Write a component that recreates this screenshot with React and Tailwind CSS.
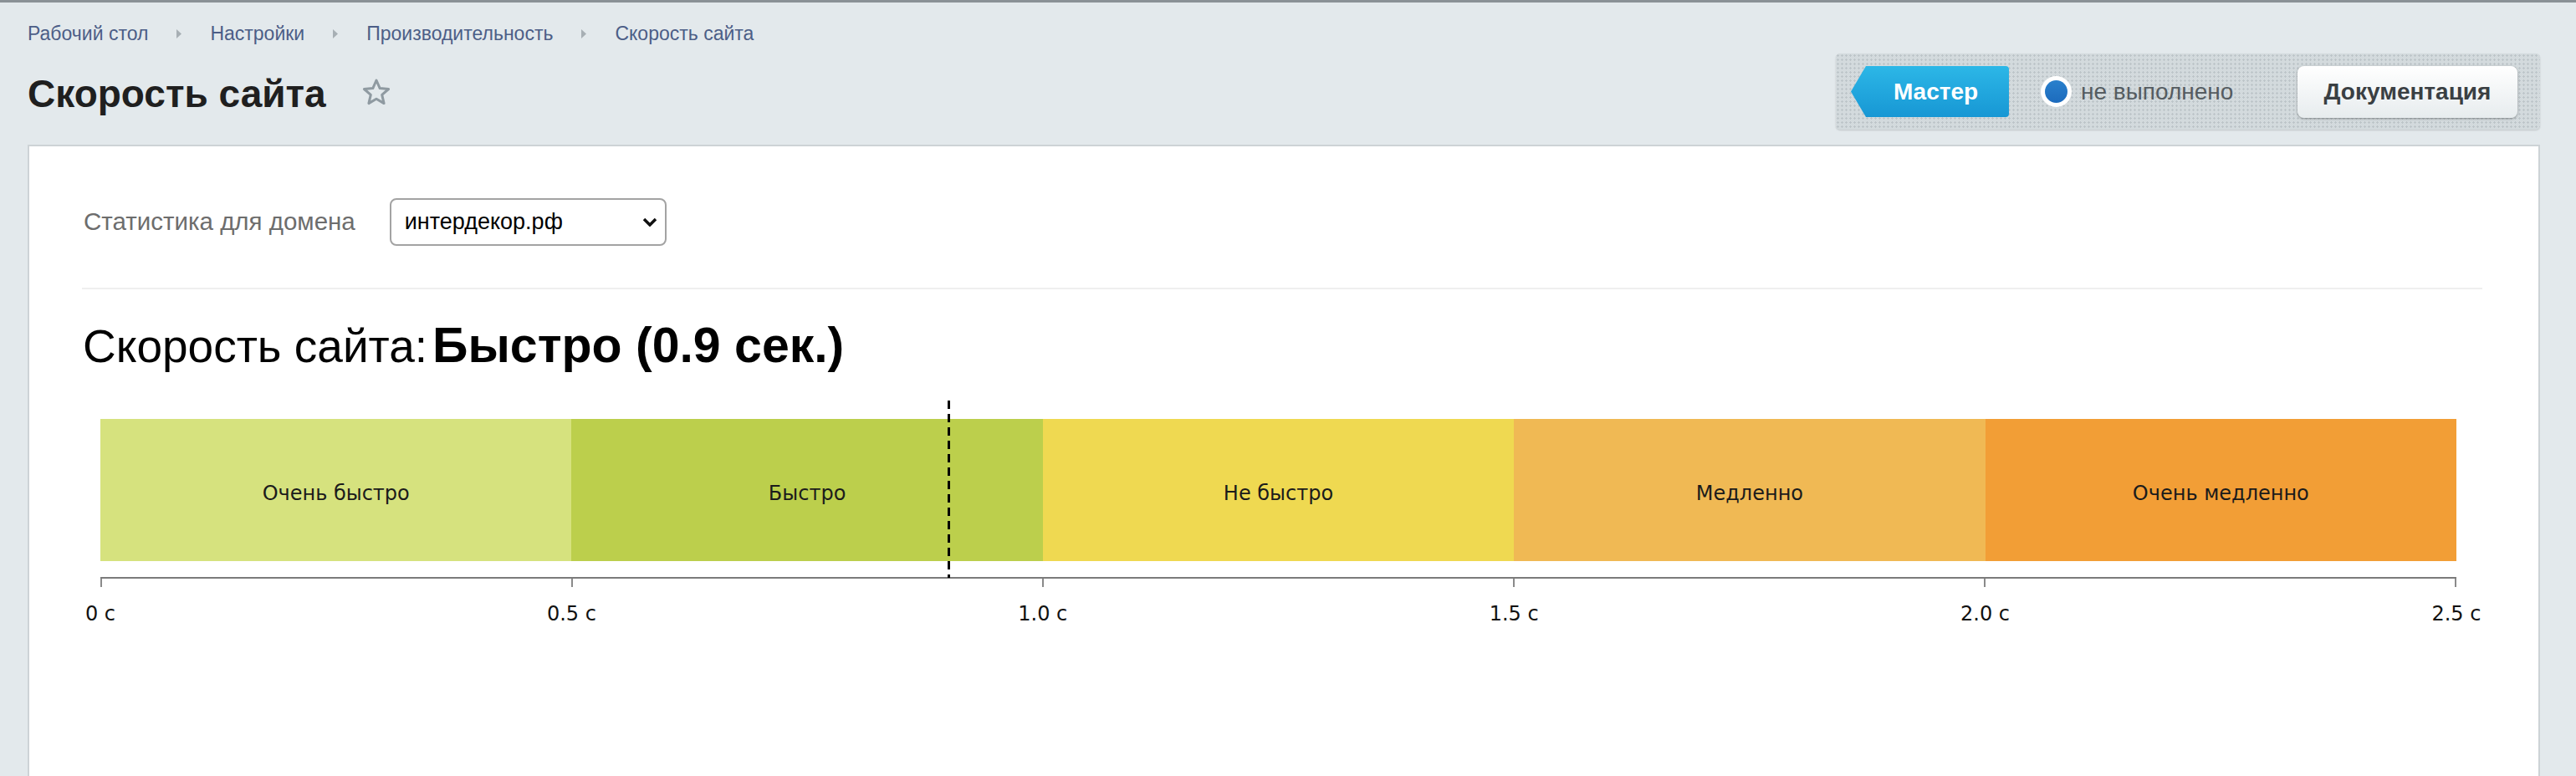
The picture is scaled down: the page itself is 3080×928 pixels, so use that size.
import React from 'react';

// speed zones of the chart, 0.5 s each
const zones = [
  { label: 'Очень быстро', color: 'bg-[#d6e27e]' },
  { label: 'Быстро', color: 'bg-[#bccf4c]' },
  { label: 'Не быстро', color: 'bg-[#efd951]' },
  { label: 'Медленно', color: 'bg-[#f0b954]' },
  { label: 'Очень медленно', color: 'bg-[#f29e36]' },
];

const ticks = ['0 с', '0.5 с', '1.0 с', '1.5 с', '2.0 с', '2.5 с'];

const crumbs = ['Рабочий стол', 'Настройки', 'Производительность', 'Скорость сайта'];

const SCALE_MAX = 2.5;
const speed = 0.9;

function Arrow() {
  return (
    <svg width="6" height="11" viewBox="0 0 6 11" className="mx-[34px]">
      <path d="M0 0 L6 5.5 L0 11 Z" fill="#a7afb4" />
    </svg>
  );
}

function Star() {
  return (
    <svg width="36" height="35" viewBox="0 0 36 35" className="ml-[42px] mt-[4px]">
      <path
        d="M18 3 L22.2 12.6 L32.6 13.5 L24.7 20.4 L27.1 30.6 L18 25.2 L8.9 30.6 L11.3 20.4 L3.4 13.5 L13.8 12.6 Z"
        fill="none"
        stroke="#8f9aa1"
        strokeWidth="3"
        strokeLinejoin="round"
      />
    </svg>
  );
}

function SpeedChart() {
  const markerLeft = (speed / SCALE_MAX) * 2817;

  return (
    <div className="relative ml-[22px] mt-[36px] w-[2817px] pt-[22px] font-['DejaVu_Sans',sans-serif]">
      {/* measured value marker */}
      <div
        className="absolute top-0 h-[212px] w-[3px] bg-[repeating-linear-gradient(to_bottom,#000_0,#000_10px,transparent_10px,transparent_16px)]"
        style={{ left: markerLeft - 1 }}
      />

      <div className="flex h-[170px]">
        {zones.map((z) => (
          <div
            key={z.label}
            className={`flex flex-1 items-center justify-center pt-[8px] text-[24px] text-[#1b1b1b] ${z.color}`}
          >
            {z.label}
          </div>
        ))}
      </div>

      <div className="mt-[19px] h-[2px] bg-[#7b7b7b]" />
      <div className="flex justify-between">
        {ticks.map((t) => (
          <div key={t} className="h-[10px] w-[2px] bg-[#8a8a8a]" />
        ))}
      </div>
      <div className="mt-[20px] flex justify-between">
        {ticks.map((t) => (
          <div key={t} className="flex w-0 justify-center whitespace-nowrap text-[24px] leading-[24px] text-[#111]">
            {t}
          </div>
        ))}
      </div>
    </div>
  );
}

export default function App() {
  return (
    <div className="min-h-screen overflow-hidden bg-[#e3e9ec] font-['Liberation_Sans',Arial,sans-serif]">
      <div className="h-[3px] bg-[#8a9196]" />

      <div className="pl-[33px] pr-[43px]">
        {/* breadcrumbs */}
        <div className="mt-[26px] flex h-[23px] items-center text-[23px] leading-[23px] text-[#4c5e87]">
          {crumbs.map((c, i) => (
            <React.Fragment key={c}>
              {i > 0 && <Arrow />}
              <span>{c}</span>
            </React.Fragment>
          ))}
        </div>

        {/* title row + wizard panel */}
        <div className="mt-[12px] flex items-start justify-between">
          <div className="mt-[25px] flex items-start">
            <h1 className="text-[46px] font-bold leading-[46px] text-[#1f1f1f]">Скорость сайта</h1>
            <Star />
          </div>

          <div className="flex h-[91px] w-[842px] items-center rounded-[5px] bg-[#d3dadd] bg-[radial-gradient(#bcc4c8_1px,transparent_1.3px)] bg-[length:5px_5px] pl-[18px] pr-[27px] shadow-[0_1px_2px_rgba(0,0,0,0.15)]">
            <div className="flex h-[61px] w-[189px] items-center justify-center rounded-r-[4px] bg-gradient-to-b from-[#2cb7e7] to-[#1797d4] pl-[14px] text-[28px] font-bold text-white [clip-path:polygon(18px_0,100%_0,100%_100%,18px_100%,0_50%)]">
              Мастер
            </div>
            <div className="ml-[38px] flex h-[37px] w-[37px] items-center justify-center rounded-full bg-white">
              <div className="h-[27px] w-[27px] rounded-full bg-gradient-to-b from-[#2a80cc] to-[#1c6bbd]" />
            </div>
            <span className="ml-[11px] text-[28px] text-[#555c61]">не выполнено</span>
            <button className="ml-auto flex h-[62px] w-[263px] items-center justify-center rounded-[8px] bg-gradient-to-b from-[#ffffff] to-[#e7ecee] text-[28px] font-bold text-[#3a3f43] shadow-[0_1px_3px_rgba(0,0,0,0.35)]">
              Документация
            </button>
          </div>
        </div>

        {/* main card */}
        <div className="mt-[18px] h-[800px] border-[2px] border-[#cdd3d6] bg-white pl-[63px] pr-[67px]">
          <div className="mt-[62px] flex items-center">
            <span className="ml-[2px] text-[29.5px] text-[#6d6d6d]">Статистика для домена</span>
            <div className="relative ml-[41px]">
              <select className="h-[57px] w-[331px] appearance-none rounded-[8px] border-[2px] border-[#a3a3a3] bg-white pl-[16px] text-[27px] text-black outline-none">
                <option>интердекор.рф</option>
              </select>
              <svg width="18" height="11" viewBox="0 0 18 11" className="pointer-events-none absolute right-[11px] top-[23px]">
                <path d="M2 2 L9 9 L16 2" fill="none" stroke="#111" strokeWidth="3.5" />
              </svg>
            </div>
          </div>

          <div className="mt-[50px] h-[2px] bg-[#efefef]" />

          <h2 className="mt-[38px] ml-[1px] flex items-baseline text-[55px] leading-[58px] text-black">
            <span>Скорость сайта:</span>
            <b className="ml-[6px] text-[59px] font-bold">Быстро (0.9 сек.)</b>
          </h2>

          <SpeedChart />
        </div>
      </div>
    </div>
  );
}
